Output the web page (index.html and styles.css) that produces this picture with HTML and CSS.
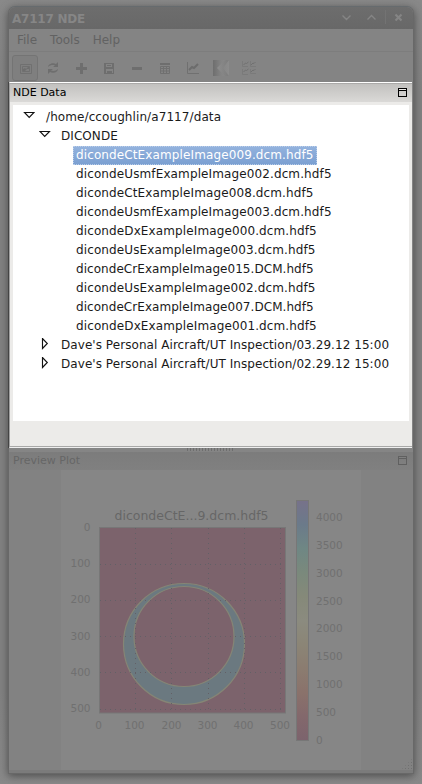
FILE: index.html
```
<!DOCTYPE html>
<html lang="en">
<head>
<meta charset="utf-8">
<title>A7117 NDE</title>
<link rel="stylesheet" href="styles.css">
</head>
<body>
<main class="window">
  <header class="titlebar">
    <h1>A7117 NDE</h1>
    <svg class="controls" width="76" height="21" viewBox="0 0 76 21">
      <path d="M6.500 7.500l4 4 4-4M31.500 11.500l4-4 4 4" />
      <path class="divider" d="M49.500 2v14" />
      <path class="close" d="M59.500 6.500l6 6M65.500 6.500l-6 6" />
    </svg>
  </header>
  <nav class="menu"><span>File</span><span>Tools</span><span>Help</span></nav>
  <div class="toolbar">
    <span class="tool active"><svg width="16" height="16"><path class="line" d="M2.500 3.500h11v9h-11zM4.500 5.500h7v5h-7z"/><path d="M5 10V8l2-1 1 1 2-2 1 0v2l-2 0-2 2z"/></svg></span>
    <span class="tool"><svg width="16" height="16"><path d="M3 7c0-3 5-5 8-3l2-2v5H8l2-1.500C8 4.500 5 5 3 7zM13 9c0 3-5 5-8 3l-2 2V9h5l-2 1.500c2 1 5 .5 7-1.500z"/></svg></span>
    <span class="tool"><svg width="16" height="16"><path d="M7 3h3v4h4v3h-4v4H7v-4H3V7h4z"/></svg></span>
    <span class="tool"><svg width="16" height="16"><path fill-rule="evenodd" d="M3 3h10v11H3zM5 4v3h6V4zM5 9v4h1v-2h5v2h1V9z"/><path d="M6 5h4v1H6zM7 12h2v2H7z"/></svg></span>
    <span class="tool"><svg width="16" height="16"><path d="M3 7h10v3H3z"/></svg></span>
    <span class="tool"><svg width="16" height="16"><path d="M3 3h10v2H3z"/><path class="line" d="M3.500 6.500h9v7h-9zM3 8.500h10M3 11h10M6.500 6v8M9.500 6v8"/></svg></span>
    <span class="tool"><svg width="16" height="16"><path class="line" d="M2.500 2v11.500H14"/><path class="thick" d="M4 10l3-3 2 1 4-4"/></svg></span>
    <span class="tool"><svg width="16" height="16"><defs><linearGradient id="hg"><stop offset="0" stop-color="#6e6e6e"/><stop offset=".5" stop-color="#848484"/><stop offset="1" stop-color="#8c8c8c"/></linearGradient><linearGradient id="wg"><stop offset="0" stop-color="#8e8e8e"/><stop offset="1" stop-color="#7c7c7c"/></linearGradient></defs><path fill="url(#hg)" d="M0 0h16v16H0z"/><path fill="url(#wg)" d="M4 8l8-8h4l-6 8 6 8h-4z"/></svg></span>
    <span class="tool"><svg width="16" height="16"><path class="line soft" d="M1.500 1v5.500H7M9.500 1v5.500H15M1.500 9v5.500H7M9.500 9v4.500H15"/><path class="line" d="M2.500 5l2-2 1 .5L7.500 2M10 5l2-2 1 .5L14.500 2M2.500 12l2-2 1 .5L7.500 9M10 12l2-2 1 .5L14.500 9"/></svg></span>
  </div>
  <section class="data">
    <div class="pane-title"><h2>NDE Data</h2><i class="max"></i></div>
    <div class="tree">
      <div class="row root"><svg width="12" height="12"><path d="M1.500 2.500h9.500L6.200 7.500z"/></svg><span>/home/ccoughlin/a7117/data</span></div>
      <div class="row branch"><svg width="12" height="12"><path d="M1 2.500h9.500L5.700 7.500z"/></svg><span>DICONDE</span></div>
      <div class="row leaf selected"><span>dicondeCtExampleImage009.dcm.hdf5</span></div>
      <div class="row leaf"><span>dicondeUsmfExampleImage002.dcm.hdf5</span></div>
      <div class="row leaf"><span>dicondeCtExampleImage008.dcm.hdf5</span></div>
      <div class="row leaf"><span>dicondeUsmfExampleImage003.dcm.hdf5</span></div>
      <div class="row leaf"><span>dicondeDxExampleImage000.dcm.hdf5</span></div>
      <div class="row leaf"><span>dicondeUsExampleImage003.dcm.hdf5</span></div>
      <div class="row leaf upper"><span>dicondeCrExampleImage015.DCM.hdf5</span></div>
      <div class="row leaf"><span>dicondeUsExampleImage002.dcm.hdf5</span></div>
      <div class="row leaf upper"><span>dicondeCrExampleImage007.DCM.hdf5</span></div>
      <div class="row leaf"><span>dicondeDxExampleImage001.dcm.hdf5</span></div>
      <div class="row branch"><svg width="12" height="12"><path d="M3.500 .5v10L8.300 5.500z"/></svg><span>Dave's Personal Aircraft/UT Inspection/03.29.12 15:00</span></div>
      <div class="row branch"><svg width="12" height="12"><path d="M3.500 .5v10L8.300 5.500z"/></svg><span>Dave's Personal Aircraft/UT Inspection/02.29.12 15:00</span></div>
    </div>
  </section>
  <div class="sash"><i></i></div>
  <section class="preview">
    <div class="pane-title"><h2>Preview Plot</h2><i class="max"></i></div>
    <svg class="plot" width="300" height="300" viewBox="61 470 300 300">
      <defs>
        <linearGradient id="spectral" x1="0" y1="0" x2="0" y2="1">
          <stop offset="0" stop-color="#77728a"/><stop offset=".1" stop-color="#6b7a8a"/><stop offset=".2" stop-color="#6f8784"/><stop offset=".3" stop-color="#7a897c"/><stop offset=".4" stop-color="#858979"/><stop offset=".5" stop-color="#8b8b7f"/><stop offset=".6" stop-color="#8b8576"/><stop offset=".7" stop-color="#8b7c70"/><stop offset=".8" stop-color="#8a726b"/><stop offset=".9" stop-color="#83686c"/><stop offset="1" stop-color="#7c636d"/>
        </linearGradient>
      </defs>
      <text class="heading" x="191.500" y="520" text-anchor="middle">dicondeCtE...9.dcm.hdf5</text>
      <rect class="field" x="99.500" y="527.500" width="186" height="185.500"/>
      <path class="ring" fill-rule="evenodd" d="M123.500 644a60.500 60.500 0 1 0 121 0a60.500 60.500 0 1 0-121 0zM134 636.500a50 50 0 1 0 100 0a50 50 0 1 0-100 0z"/>
      <path class="grid" d="M135.500 528v185M171.500 528v185M208.500 528v185M244.500 528v185M280.500 528v185M100 564.500h185M100 600.500h185M100 636.500h185M100 672.500h185M100 709.500h185"/>
      <rect class="scale" x="296.500" y="500.500" width="12" height="240"/>
      <g class="end"><text x="90.500" y="531">0</text><text x="90.500" y="567">100</text><text x="90.500" y="603">200</text><text x="90.500" y="640">300</text><text x="90.500" y="676">400</text><text x="90.500" y="712">500</text></g>
      <g class="mid"><text x="98.500" y="729">0</text><text x="134.500" y="729">100</text><text x="171.500" y="729">200</text><text x="207.500" y="729">300</text><text x="243.500" y="729">400</text><text x="280" y="729">500</text></g>
      <g><text x="316" y="521">4000</text><text x="316" y="549">3500</text><text x="316" y="577">3000</text><text x="316" y="605">2500</text><text x="316" y="632">2000</text><text x="316" y="660">1500</text><text x="316" y="688">1000</text><text x="316" y="716">500</text><text x="316" y="744">0</text></g>
    </svg>
    <i class="grip"></i>
  </section>
</main>
</body>
</html>
```
FILE: styles.css
```
* { box-sizing: border-box; }
body {
  margin: 0;
  height: 784px;
  padding: 6px 9px 0 8px;
  overflow: hidden;
  background: linear-gradient(#898989, #828282 12%, #828282 88%, #898989);
  font: 12px/19px "DejaVu Sans", sans-serif;
}
h1, h2 { margin: 0; font-size: inherit; }
.window {
  width: 406px;
  height: 768px;
  border: 1px solid #686868;
  border-top-color: #666b6e;
  border-radius: 7px 7px 0 0;
  background: #848484;
  box-shadow: 0 2px 9px #4c4c4c;
  display: flex;
  flex-direction: column;
}
.titlebar {
  height: 22px;
  flex: none;
  display: flex;
  justify-content: space-between;
  padding: 1px 1px 0 3px;
  background: linear-gradient(#6d6d6d, #686868);
  border-radius: 6px 6px 0 0;
  color: #868686;
}
h1 { font-size: 12px; line-height: 22px; letter-spacing: -.22px; }
.controls { fill: none; stroke: #858585; stroke-width: 1.4; }
.controls .divider { stroke: #737373; stroke-width: 1; }
.controls .close { stroke-width: 2.200; }
.menu {
  height: 23px;
  flex: none;
  display: flex;
  gap: 13px;
  padding: 2px 8px;
  border-bottom: 1px solid #7d7d7d;
  color: #626262;
}
.toolbar { height: 30px; flex: none; display: flex; gap: 2px; padding: 3px; }
.tool { width: 26px; height: 26px; padding: 5px; }
.tool svg { display: block; fill: #6e6e6e; }
.tool .line { fill: none; stroke: #707070; }
.tool .soft { stroke: #7a7a7a; }
.tool .thick { fill: none; stroke: #6c6c6c; stroke-width: 2; }
.tool.active { border: 1px solid #747474; border-radius: 3px; background: #7f7f7f; }
.data {
  height: 366px;
  flex: none;
  margin: 0 1px 0 0;
  border-top: 1px solid #fff;
  border-left: 1px solid #a0a0a0;
  border-bottom: 1px solid #eee;
  background: #ecebe9;
  box-shadow: inset 0 -1px #a8a8a7, -1px 0 #444;
}
.pane-title {
  height: 20px;
  display: flex;
  justify-content: space-between;
  align-items: center;
  padding: 0 5px 2px 3px;
}
.pane-title h2 { font-size: 11px; font-weight: 400; }
.data .pane-title { padding-bottom: 2px; border-top: 1px solid #aaa9a8; background: linear-gradient(#c2c1bf, #dad9d7) 0 0 / 100% 18px no-repeat; }
.max { width: 9px; height: 9px; border: 1px solid #000; box-shadow: inset 0 1px #ecebe9, inset 0 2px #000; }
.tree { width: 396px; height: 316px; margin: 2px 0 0 3px; padding-top: 3px; background: #fff; color: #1a1a1a; }
.row { height: 19px; display: flex; white-space: nowrap; letter-spacing: .06px; }
.row svg { flex: none; fill: none; stroke: #111; stroke-width: 1.15; margin: 2px 10px 0 0; }
.root { padding-left: 11px; letter-spacing: .09px; }
.root svg { margin: 2px 11px 0 -1px; }
.branch { padding-left: 26px; }
.leaf { padding-left: 60px; letter-spacing: .115px; }
.upper { letter-spacing: .05px; }
.leaf span { padding: 0 3px; }
.selected span { background: linear-gradient(#94b3de, #7a9fd1); color: #fff; outline: 1px dotted #b9cde9; outline-offset: -1px; }
.sash { height: 4px; flex: none; display: flex; justify-content: center; background: #858585; }
.sash i { width: 48px; height: 3px; background: repeating-linear-gradient(90deg, #6e6e6e 0 1px, #858585 1px 3px); }
.preview { flex: 1; position: relative; display: flex; flex-direction: column; color: #666; background: #828282; border-bottom: 3px solid #7b7b7b; }
.preview .pane-title { background: linear-gradient(#7c7c7c, #808080); height: 18px; padding: 0 6px 1px 4px; }
.preview .max { border-color: #606060; box-shadow: inset 0 1px #808080, inset 0 2px #606060; }
.plot { display: block; margin-left: 52px; background: #868686; font-size: 10.500px; fill: #707070; }
.heading { font-size: 12.500px; fill: #666; }
.field { fill: #7c636c; stroke: #777; }
.ring { fill: #6b7980; stroke: #858575; stroke-width: 1.2; }
.grid { fill: none; stroke: #626066; stroke-dasharray: 1 4; }
.scale { fill: url(#spectral); stroke: #777; }
.mid { text-anchor: middle; }
.end { text-anchor: end; }
.grip { position: absolute; right: 0; bottom: 0; width: 12px; height: 12px; background: radial-gradient(#707070 30%, transparent 35%) 0 0 / 3px 3px; clip-path: polygon(100% 0, 100% 100%, 0 100%); }
```
